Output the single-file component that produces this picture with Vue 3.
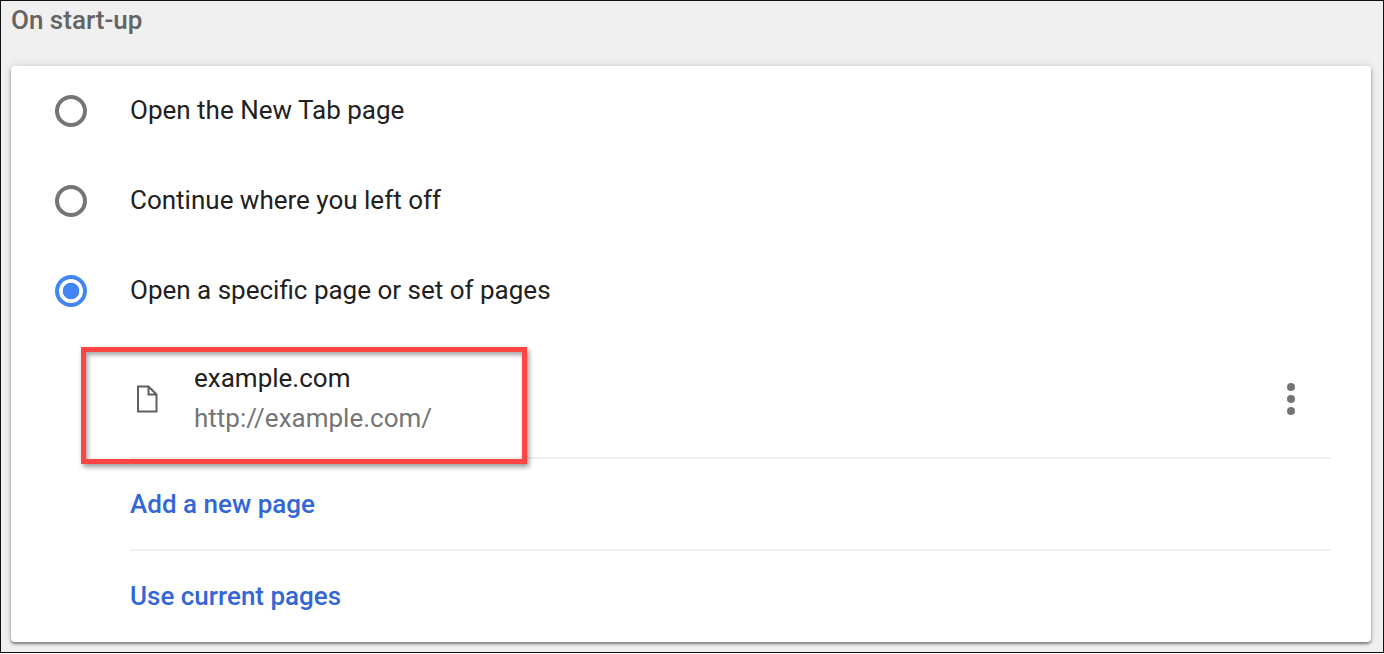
<script setup>
const options = [
  { label: 'Open the New Tab page', checked: false },
  { label: 'Continue where you left off', checked: false },
  { label: 'Open a specific page or set of pages', checked: true }
];
</script>

<template>
  <div class="page">
    <h2 class="section-title">On start-up</h2>

    <section class="card">
      <div v-for="opt in options" :key="opt.label" class="radio-row">
        <span class="radio" :class="{ checked: opt.checked }"></span>
        <span class="radio-label">{{ opt.label }}</span>
      </div>

      <div class="start-page">
        <svg class="file-icon" width="22" height="28" viewBox="0 0 22 28">
          <path d="M2 1.5H12.5L20.5 9.5V26.5H2Z M12.5 1.5V9.5H20.5" fill="none" stroke="#5f5f5f" stroke-width="2" />
        </svg>
        <div class="page-text">
          <div class="page-name">example.com</div>
          <div class="page-url">http://example.com/</div>
        </div>
        <div class="more">
          <span></span>
          <span></span>
          <span></span>
        </div>
      </div>

      <div class="link-row first">Add a new page</div>
      <div class="link-row second">Use current pages</div>

      <div class="highlight"></div>
    </section>
  </div>
</template>

<style scoped>
.page {
  box-sizing: border-box;
  width: 1384px;
  height: 653px;
  padding: 0 12px 0 11px;
  background: #f0f0f0;
  border: 1px solid #111;
  font-family: Roboto, "Liberation Sans", sans-serif;
}

.section-title {
  margin: 0 0 0 -1px;
  height: 64px;
  padding-top: 3px;
  box-sizing: border-box;
  font-size: 26px;
  line-height: 32px;
  font-weight: 500;
  color: #646464;
}

.card {
  position: relative;
  margin-left: -1px;
  width: 1360px;
  height: 576px;
  background: #fff;
  border-radius: 4px;
  box-shadow: 0 2px 3px rgba(0, 0, 0, 0.45), 0 0 10px rgba(0, 0, 0, 0.12);
}

.radio-row {
  display: flex;
  align-items: center;
  height: 90px;
  padding-left: 44px;
}
.radio-row:first-child {
  margin-top: 1px;
}

.radio {
  box-sizing: border-box;
  width: 32px;
  height: 32px;
  margin-right: 43px;
  border: 4px solid #757575;
  border-radius: 50%;
  flex-shrink: 0;
}
.radio.checked {
  border-color: #4285f4;
  background: radial-gradient(circle, #4285f4 0 8px, #fff 8.6px);
}

.radio-label {
  margin-top: -2px;
  font-size: 26px;
  color: #212121;
}

.start-page {
  box-sizing: border-box;
  display: flex;
  align-items: center;
  height: 123px;
  margin: 0 40px 0 119px;
  padding-left: 6px;
  border-bottom: 2px solid #f0f0f0;
}

.file-icon {
  margin-right: 36px;
  margin-top: 4px;
  flex-shrink: 0;
}

.page-text {
  flex: 1;
  margin-top: 3px;
}
.page-name {
  font-size: 26px;
  line-height: 40px;
  color: #212121;
}
.page-url {
  font-size: 26px;
  line-height: 40px;
  color: #757575;
}

.more {
  display: flex;
  flex-direction: column;
  gap: 4px;
  margin-top: 5px;
  margin-right: 36px;
}
.more span {
  width: 8px;
  height: 8px;
  border-radius: 50%;
  background: #757575;
}

.link-row {
  box-sizing: border-box;
  display: flex;
  align-items: center;
  margin: 0 40px 0 119px;
  font-size: 26px;
  font-weight: 500;
  color: #3367d6;
}
.link-row.first {
  height: 92px;
  padding-bottom: 1px;
  border-bottom: 2px solid #f0f0f0;
}
.link-row.second {
  height: 90px;
  padding-bottom: 1px;
}

.highlight {
  position: absolute;
  left: 70px;
  top: 281px;
  width: 446px;
  height: 117px;
  box-sizing: border-box;
  border: 5px solid #ff4444;
  box-shadow: 2px 3px 5px rgba(0, 0, 0, 0.4), inset 2px 3px 4px rgba(0, 0, 0, 0.35);
}
</style>
